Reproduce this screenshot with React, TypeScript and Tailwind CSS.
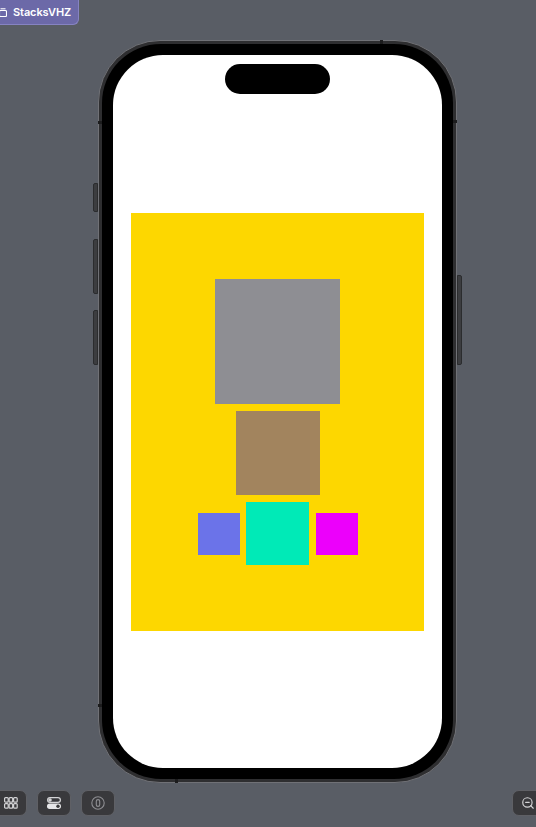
import { ZoomOut } from "lucide-react";

const GridIcon = () => (
  <svg width="14" height="12" viewBox="0 0 14 12" fill="none" stroke="#d4d4d6" strokeWidth="1.2">
    {[0.6, 5.1, 9.6].map((x) =>
      [0.6, 6.6].map((y) => (
        <rect key={`${x}-${y}`} x={x} y={y} width="3.6" height="4.6" rx="1" />
      ))
    )}
  </svg>
);

const ToggleIcon = () => (
  <svg width="14" height="12" viewBox="0 0 14 12">
    <rect x="0.6" y="0.6" width="12.8" height="4.8" rx="2.4" fill="none" stroke="#d4d4d6" strokeWidth="1.2" />
    <circle cx="3" cy="3" r="1.8" fill="#d4d4d6" />
    <rect x="0" y="6.6" width="14" height="5.4" rx="2.7" fill="#e6e6e8" />
    <circle cx="11" cy="9.3" r="1.7" fill="#3a3a3c" />
  </svg>
);

const DeviceIcon = () => (
  <svg width="14" height="14" viewBox="0 0 14 14" fill="none" stroke="#8e8e92" strokeWidth="1.1">
    <circle cx="7" cy="7" r="6.2" />
    <rect x="5.3" y="3.6" width="3.4" height="6.8" rx="1.7" />
  </svg>
);

const ToolButton = ({ children, className = "" }: { children: React.ReactNode; className?: string }) => (
  <div
    className={`w-[34px] h-[26px] rounded-[7px] bg-[#39393c] border border-[#5f6065] flex items-center justify-center ${className}`}
  >
    {children}
  </div>
);

export default function App() {
  return (
    <div className="w-[536px] h-[827px] overflow-hidden bg-[#595d65] flex flex-col font-['Inter','Liberation_Sans',sans-serif]">
      {/* preview badge */}
      <div className="self-start -ml-[8px] h-[25px] pl-[6px] pr-[7px] flex items-center gap-[6px] bg-[#6c69a8] border border-t-0 border-[#8683c2] rounded-b-[6px]">
        <svg width="8" height="9" viewBox="0 0 8 9" fill="none" stroke="#ffffff" strokeWidth="1.1">
          <rect x="0.5" y="2.5" width="7" height="6" rx="1" />
          <path d="M1.5 0.8h5" />
        </svg>
        <span className="text-white text-[11px] font-semibold leading-none tracking-[-0.1px]">StacksVHZ</span>
      </div>

      {/* phone */}
      <div className="relative ml-[98px] mt-[15px] w-[359px] h-[743px]">
        <div className="absolute -left-[5px] top-[143px] w-[5px] h-[29px] rounded-l-[2px] bg-[#3c3d40] border border-[#2b2c2e]" />
        <div className="absolute -left-[5px] top-[199px] w-[5px] h-[55px] rounded-l-[2px] bg-[#3c3d40] border border-[#2b2c2e]" />
        <div className="absolute -left-[5px] top-[270px] w-[5px] h-[55px] rounded-l-[2px] bg-[#3c3d40] border border-[#2b2c2e]" />
        <div className="absolute left-[359px] top-[235px] w-[5px] h-[90px] rounded-r-[2px] bg-[#3c3d40] border border-[#2b2c2e]" />

        <div className="w-full h-full rounded-[62px] bg-[#2e2e30] border border-[#707176] p-[3px]">
          <div className="relative w-full h-full rounded-[59px] bg-black p-[11px]">
            <div className="absolute left-[-4px] top-[77px] w-[4px] h-[3px] bg-[#1c1c1d]" />
            <div className="absolute right-[-4px] top-[76px] w-[4px] h-[3px] bg-[#1c1c1d]" />
            <div className="absolute left-[278px] top-[-4px] w-[3px] h-[4px] bg-[#1c1c1d]" />
            <div className="absolute left-[73px] bottom-[-4px] w-[3px] h-[4px] bg-[#1c1c1d]" />
            <div className="absolute left-[-4px] top-[660px] w-[4px] h-[3px] bg-[#1c1c1d]" />

            <div className="w-full h-full rounded-[50px] bg-white flex flex-col items-center overflow-hidden">
              <div className="mt-[9px] w-[105px] h-[30px] rounded-full bg-black" />

              <div className="mt-[119px] w-[293px] h-[418px] bg-[#fdd700] flex flex-col items-center justify-center gap-[7px]">
                <div className="w-[125px] h-[125px] bg-[#8e8e93]" />
                <div className="w-[84px] h-[84px] bg-[#a2845e]" />
                <div className="flex items-center gap-[6.5px]">
                  <div className="w-[42px] h-[42px] bg-[#6b73e9]" />
                  <div className="w-[63px] h-[63px] bg-[#00eab7]" />
                  <div className="w-[42px] h-[42px] bg-[#ec00fb]" />
                </div>
              </div>
            </div>
          </div>
        </div>
      </div>

      {/* canvas toolbar */}
      <div className="mt-[7px] flex items-center">
        <div className="-ml-[7px] flex items-center gap-[10px]">
          <ToolButton className="pl-[2px]">
            <GridIcon />
          </ToolButton>
          <ToolButton>
            <ToggleIcon />
          </ToolButton>
          <ToolButton>
            <DeviceIcon />
          </ToolButton>
        </div>
        <ToolButton className="ml-auto -mr-[10px] justify-start pl-[8px]">
          <ZoomOut size={14} color="#d4d4d6" strokeWidth={2} />
        </ToolButton>
      </div>
    </div>
  );
}
